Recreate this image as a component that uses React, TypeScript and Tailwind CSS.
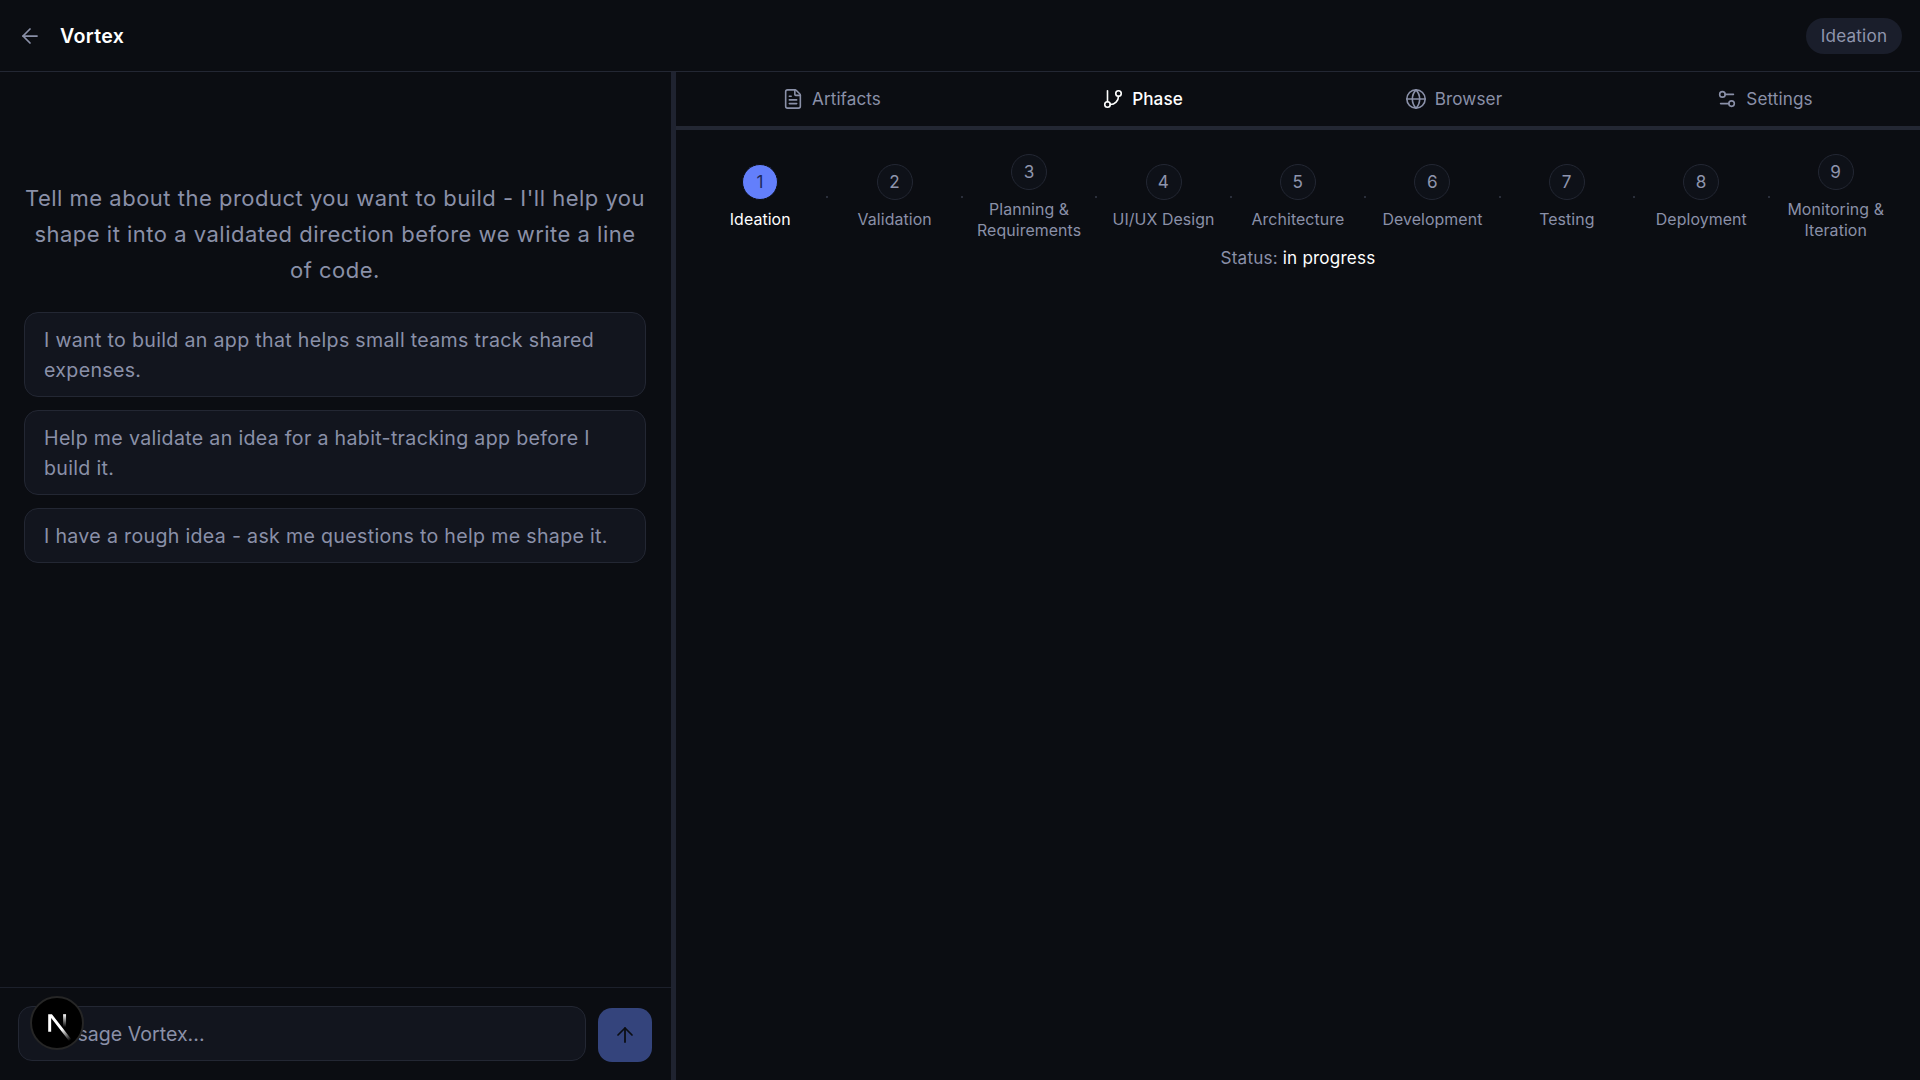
import { ArrowLeft, ArrowUp, FileText, GitBranch, Globe, Settings2 } from "lucide-react"

const tabs = [
  { label: "Artifacts", icon: FileText },
  { label: "Phase", icon: GitBranch, active: true },
  { label: "Browser", icon: Globe },
  { label: "Settings", icon: Settings2 },
]

const phases = [
  ["Ideation"],
  ["Validation"],
  ["Planning &", "Requirements"],
  ["UI/UX Design"],
  ["Architecture"],
  ["Development"],
  ["Testing"],
  ["Deployment"],
  ["Monitoring &", "Iteration"],
]

const prompts = [
  "I want to build an app that helps small teams track shared expenses.",
  "Help me validate an idea for a habit-tracking app before I build it.",
  "I have a rough idea - ask me questions to help me shape it.",
]

function Step({ index, lines }: { index: number; lines: string[] }) {
  const active = index === 0
  return (
    <div className="flex flex-1 min-w-0 flex-col items-center">
      <div
        className={
          active
            ? "flex h-9 w-9 items-center justify-center rounded-full border border-[#0b0d12] bg-[#637ffb] text-[17.14px] text-[#1f2a5c]"
            : "flex h-9 w-9 items-center justify-center rounded-full border border-[#232733] bg-[#0e1118] text-[17.14px] text-[#8f95ad]"
        }
      >
        {index + 1}
      </div>
      <div className={active ? "mt-[9px] text-center text-[15.9px] leading-[21px] tracking-[0.005em] text-white" : "mt-[9px] text-center text-[15.9px] leading-[21px] tracking-[0.005em] text-[#8a90a8]"}>
        {lines.map((line) => (
          <div key={line}>{line}</div>
        ))}
      </div>
    </div>
  )
}

function NextLogo() {
  return (
    <svg viewBox="0 0 180 180" className="h-[44px] w-[44px]" fill="none">
      <defs>
        <linearGradient id="logo-diagonal" gradientUnits="userSpaceOnUse" x1="109" y1="116.5" x2="144.5" y2="160.5">
          <stop stopColor="#fff" />
          <stop offset="1" stopColor="#fff" stopOpacity="0" />
        </linearGradient>
        <linearGradient id="logo-stem" gradientUnits="userSpaceOnUse" x1="121" y1="54" x2="120.8" y2="106.9">
          <stop stopColor="#fff" />
          <stop offset="1" stopColor="#fff" stopOpacity="0" />
        </linearGradient>
      </defs>
      <path d="M149.508 157.52L69.142 54H54V125.97H66.1136V69.3836L139.999 164.845C143.333 162.614 146.509 160.165 149.508 157.52Z" fill="url(#logo-diagonal)" />
      <rect x="115" y="54" width="12" height="72" fill="url(#logo-stem)" />
    </svg>
  )
}

export default function App() {
  return (
    <div className="flex h-screen w-full flex-col overflow-hidden bg-[#0b0d12] font-[Inter,sans-serif] tracking-[0.02em]">
      <header className="flex h-[72px] shrink-0 items-center justify-between border-b border-[#232733] pl-[18px] pr-[18px] pt-px">
        <div className="mt-[1px] flex items-center gap-[18px]">
          <ArrowLeft className="h-6 w-6 text-[#8a90a8]" strokeWidth={1.75} />
          <span className="text-[19.6px] font-semibold text-white">Vortex</span>
        </div>
        <div className="flex h-9 w-[96px] items-center justify-center rounded-full bg-[#1a1e2b] text-[17.14px] tracking-[0.01em] text-[#8f95ad]">Ideation</div>
      </header>
      <div className="flex min-h-0 flex-1">
        <aside className="relative flex w-[671px] shrink-0 flex-col">
          <div className="flex-1 pl-6 pr-[25px] pt-[108px]">
            <p className="text-center text-[22px] leading-[36px] tracking-[0.0225em] text-[#8a90a8]">
              Tell me about the product you want to build - I'll help you shape it into a validated direction before we write a line of code.
            </p>
            <div className="mt-[24px] flex flex-col gap-[13px]">
              {prompts.map((prompt) => (
                <div key={prompt} className="rounded-[14px] border border-[#232733] bg-[#12151e] px-[19px] py-[11.5px] text-[19.6px] leading-[30px] text-[#8a90a8]">
                  {prompt}
                </div>
              ))}
            </div>
          </div>
          <div className="flex items-start gap-3 border-t border-[#1c202b] pb-[18px] pl-[18px] pr-[19px] pt-[18px]">
            <input
              readOnly
              placeholder="Message Vortex..."
              className="h-[55px] min-w-0 flex-1 rounded-[14px] border border-[#232733] bg-[#12151e] px-[19px] text-[19.6px] tracking-normal outline-none placeholder:text-[#8a90a8]"
            />
            <button className="mt-[2px] flex h-[54px] w-[54px] items-center justify-center rounded-[14px] bg-[#34447c] text-[#0b0d12]">
              <ArrowUp className="h-6 w-6" strokeWidth={1.75} />
            </button>
          </div>
          <div className="absolute left-[30px] top-[924px] flex h-[54px] w-[54px] items-center justify-center rounded-full border-2 border-[#262626] bg-black">
            <NextLogo />
          </div>
        </aside>
        <div className="w-[5px] shrink-0 bg-[#1f2330]" />
        <main className="flex min-w-0 flex-1 flex-col">
          <nav className="flex h-[58px] shrink-0 border-b-4 border-[#232733]">
            {tabs.map((tab) => (
              <div
                key={tab.label}
                className={
                  tab.active
                    ? "flex flex-1 items-center justify-center gap-[8px] text-[17.14px] font-medium tracking-[0.005em] text-white"
                    : "flex flex-1 items-center justify-center gap-[8px] text-[17.14px] tracking-[0.005em] text-[#8a90a8]"
                }
              >
                <tab.icon className="h-[22px] w-[22px]" strokeWidth={1.75} />
                {tab.label}
              </div>
            ))}
          </nav>
          <section className="px-[18px] pt-[23.5px]">
            <div className="flex items-center">
              {phases.map((lines, i) => (
                <div key={lines[0]} className="contents">
                  {i > 0 && <div className="h-[2px] w-[2px] shrink-0 bg-[#2a2e3a]" />}
                  <Step index={i} lines={lines} />
                </div>
              ))}
            </div>
            <p className="mt-[5.5px] text-center text-[17.14px] leading-[24px] tracking-[0.01em] text-[#8a90a8]">
              Status: <span className="text-white">in progress</span>
            </p>
          </section>
        </main>
      </div>
    </div>
  )
}
